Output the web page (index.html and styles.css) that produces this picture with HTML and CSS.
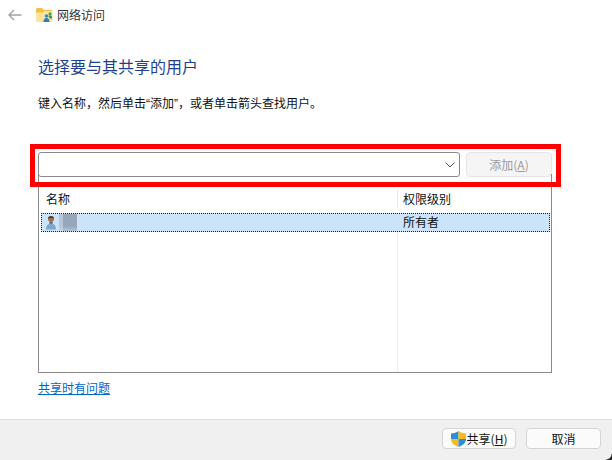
FILE: index.html
```html
<!DOCTYPE html>
<html lang="zh-CN">
<head>
  <meta charset="UTF-8" />
  <title>网络访问</title>
  <link rel="stylesheet" href="styles.css">
</head>
<body>

  <div class="topbar">
    <svg class="back" width="14" height="12" viewBox="0 0 14 12" fill="none" stroke="#a3a3a3" stroke-width="1.4">
      <path d="M13.5 6H1.2M6 1L1 6l5 5" />
    </svg>
    <svg class="folder" width="17" height="16" viewBox="0 0 17 16">
      <path d="M0 2.500C0 1.700.6 1 1.400 1H6l1.600 2H15c.8 0 1.300.6 1.300 1.300V13c0 .8-.6 1.500-1.300 1.500H1.400C.6 14.500 0 13.800 0 13z" fill="#f3bf45" />
      <path d="M0 5.500h7l1.500-1.500H16.300V13c0 .8-.6 1.500-1.300 1.500H1.400C.6 14.500 0 13.800 0 13z" fill="#fbe49c" />
      <circle cx="10.500" cy="9" r="1.800" fill="#2f8fc4" />
      <circle cx="14" cy="6.800" r="1.500" fill="#3aa06a" />
      <path d="M7.500 15c0-2.400 1.200-4 3-4s3 1.600 3 4z" fill="#2f7fb0" />
      <path d="M12.300 9c.6-.6 1.100-.8 1.800-.8 1.100 0 2 .9 2 2.300v1h-2.500c-.2-1-.6-1.800-1.300-2.500z" fill="#37956a" />
    </svg>
    <span class="title">网络访问</span>
  </div>

  <div class="content">
    <h1>选择要与其共享的用户</h1>
    <p class="hint">键入名称，然后单击“添加”，或者单击箭头查找用户。</p>

    <div class="add-row">
      <div class="combo">
        <svg width="10" height="6" viewBox="0 0 10 6" fill="none" stroke="#555" stroke-width="1">
          <path d="M.5 .5L5 5l4.500-4.500" />
        </svg>
      </div>
      <div class="btn btn-add">添加(<u>A</u>)</div>
    </div>

    <div class="list">
      <div class="list-head">
        <div class="col-name">名称</div>
        <div class="col-level">权限级别</div>
      </div>
      <div class="list-row">
        <svg class="user" width="10" height="15" viewBox="0 0 10 15">
          <circle cx="5" cy="4" r="3" fill="#9a7357" />
          <path d="M2 3.500C2 .6 8 .6 8 3.500 6.500 2.600 3.500 2.600 2 3.500z" fill="#3c3029" />
          <path d="M3.500 7h3v2h-3z" fill="#6d5442" />
          <path d="M0 14.500c0-3.800 1.800-6 5-6s5 2.200 5 6z" fill="#7fa6cc" />
        </svg>
        <div class="avatar"></div>
        <div class="row-level">所有者</div>
      </div>
      <div class="list-rest">
        <div class="rest-name"></div>
        <div class="rest-level"></div>
      </div>
    </div>

    <a class="help" href="#">共享时有问题</a>
  </div>

  <div class="footer">
    <div class="btn btn-share">
      <svg width="15" height="16" viewBox="0 0 15 16">
        <path d="M0 2.500C3 2.300 5.500 1.500 7.500 0v8H0z" fill="#2f8ed6" />
        <path d="M7.500 0C9.500 1.500 12 2.300 15 2.500V8H7.500z" fill="#f4bc1c" />
        <path d="M0 8h7.500v8C3 14.500 0 11.500 0 8z" fill="#f4bc1c" />
        <path d="M7.500 8H15c0 3.500-3 6.500-7.500 8z" fill="#2f8ed6" />
      </svg>
      <span>共享(<u>H</u>)</span>
    </div>
    <div class="btn btn-cancel">取消</div>
  </div>

  <!-- 红框标注 -->
  <div class="mark"></div>
  <div class="corner"></div>

</body>
</html>
```

FILE: styles.css
```css
html, body {
  height: 100%;
}
body {
  margin: 0;
  position: relative;
  display: flex;
  flex-direction: column;
  background: #fff;
  color: #111;
  font-family: "Noto Sans CJK SC", "Noto Sans", sans-serif;
  font-size: 12px;
  overflow: hidden;
}
.topbar {
  height: 29px;
  display: flex;
  align-items: center;
  padding-left: 8px;
}
.back {
  margin-right: 14px;
}
.folder {
  margin-right: 4px;
}
.title {
  color: #333;
}
.content {
  flex: 1;
  padding: 0 60px 0 38px;
  display: flex;
  flex-direction: column;
}
h1 {
  margin: 25px 0 0;
  height: 24px;
  line-height: 24px;
  font-size: 16px;
  font-weight: normal;
  color: #1f3f8f;
}
.hint {
  margin: 17px 0 0;
  height: 18px;
  line-height: 18px;
  font-family: "Liberation Sans", "Noto Sans CJK SC", sans-serif;
}
.add-row {
  margin-top: 39px;
  display: flex;
  gap: 6px;
  height: 25px;
}
.combo {
  width: 422px;
  box-sizing: border-box;
  border: 1px solid #8a8a8a;
  border-radius: 3px;
  display: flex;
  align-items: center;
  justify-content: flex-end;
  padding-right: 4px;
}
.btn {
  box-sizing: border-box;
  border: 1px solid #d4d4d4;
  border-radius: 4px;
  background: #fbfbfb;
  display: flex;
  align-items: center;
  justify-content: center;
}
.btn-add {
  width: 86px;
  background: #f5f5f5;
  border-color: #e5e5e5;
  color: #9a9a9a;
}
.list {
  width: 514px;
  height: 199px;
  margin-top: -3px;
  box-sizing: border-box;
  border: 1px solid #8a8a8a;
  border-top: 0;
  display: flex;
  flex-direction: column;
}
.list-head {
  height: 39px;
  display: flex;
  align-items: flex-end;
  padding-bottom: 5px;
  box-sizing: border-box;
}
.col-name {
  width: 358px;
  padding-left: 7px;
  box-sizing: border-box;
  line-height: 18px;
}
.col-level {
  padding-left: 5px;
  line-height: 18px;
  border-left: 1px solid #e6e6e6;
}
.list-row {
  height: 19px;
  margin: 0 1px 0 2px;
  box-sizing: border-box;
  border: 1px dotted #222;
  background: #cce4f9;
  display: flex;
  align-items: center;
  padding-left: 4px;
}
.user {
  margin-right: 3px;
}
.avatar {
  width: 18px;
  height: 17px;
  background:
    linear-gradient(rgba(204, 228, 249, 0) 70%, rgba(204, 228, 249, .5)),
    linear-gradient(90deg, #b7c6d6 4px, #97a6b8 4px);
}
.row-level {
  margin-left: 326px;
  padding-bottom: 2px;
}
.list-rest {
  flex: 1;
  display: flex;
}
.rest-name {
  width: 358px;
}
.rest-level {
  border-left: 1px solid #f0f0f0;
}
.help {
  margin-top: 6px;
  line-height: 18px;
  color: #0066cc;
}
.footer {
  height: 41px;
  background: #f0f0f0;
  border-top: 1px solid #dfdfdf;
  display: flex;
  justify-content: flex-end;
  gap: 10px;
  padding: 8px 11px 0 0;
  box-sizing: border-box;
}
.btn-share {
  width: 74px;
  height: 21px;
  gap: 1px;
}
.btn-cancel {
  width: 75px;
  height: 21px;
}
.mark {
  position: absolute;
  left: 30px;
  top: 144px;
  width: 531px;
  height: 43px;
  box-sizing: border-box;
  border: 5px solid #f00;
}
.corner {
  position: absolute;
  right: 0;
  bottom: 0;
  width: 6px;
  height: 6px;
  background: radial-gradient(circle at 0 0, transparent 5px, #222 6px);
}
```
